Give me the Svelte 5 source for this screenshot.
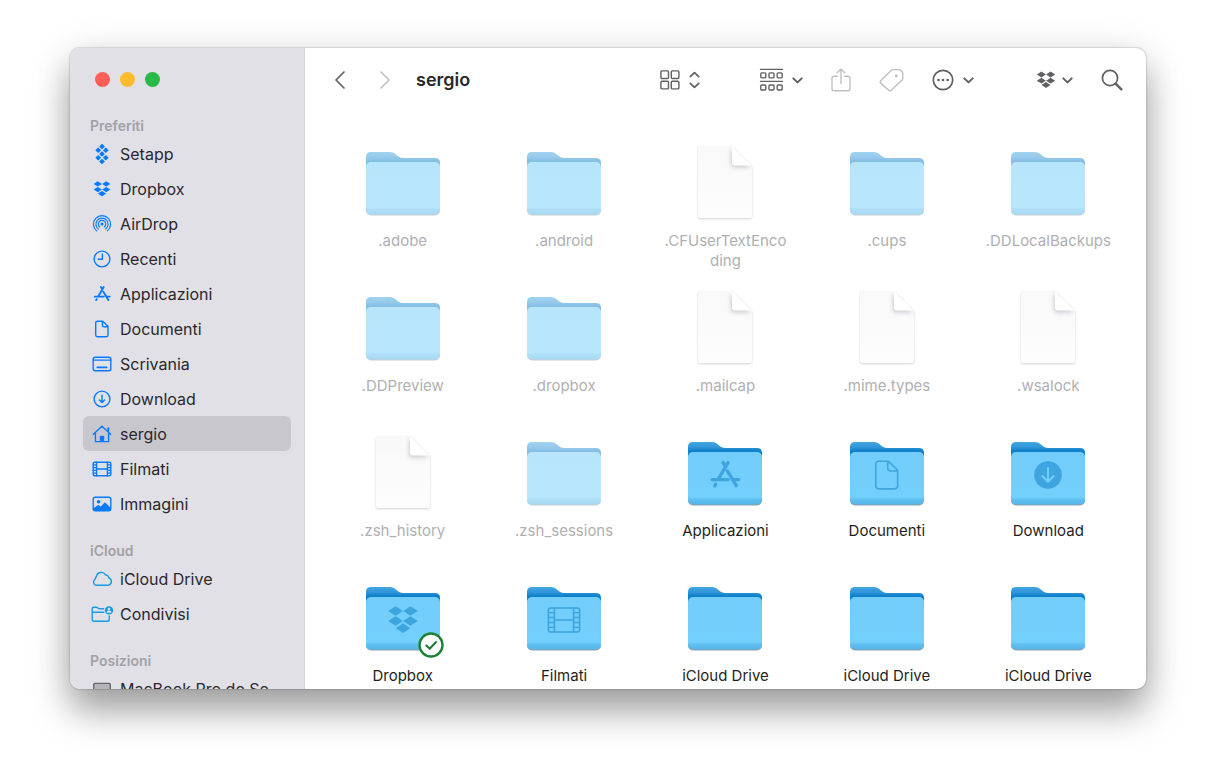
<script>
    const sections = [
        {
            title: "Preferiti",
            items: [
                { name: "Setapp", icon: "setapp" },
                { name: "Dropbox", icon: "dropbox" },
                { name: "AirDrop", icon: "airdrop" },
                { name: "Recenti", icon: "clock" },
                { name: "Applicazioni", icon: "apps" },
                { name: "Documenti", icon: "document" },
                { name: "Scrivania", icon: "desktop" },
                { name: "Download", icon: "download" },
                { name: "sergio", icon: "home" },
                { name: "Filmati", icon: "film" },
                { name: "Immagini", icon: "image" },
            ],
        },
        {
            title: "iCloud",
            tint: "cloud",
            items: [
                { name: "iCloud Drive", icon: "cloud" },
                { name: "Condivisi", icon: "shared" },
            ],
        },
        {
            title: "Posizioni",
            tint: "device",
            items: [{ name: "MacBook Pro de Se...", icon: "laptop" }],
        },
    ];

    const files = [
        { name: ".adobe", kind: "folder", hidden: true },
        { name: ".android", kind: "folder", hidden: true },
        { name: ".CFUserTextEncoding", kind: "file", hidden: true },
        { name: ".cups", kind: "folder", hidden: true },
        { name: ".DDLocalBackups", kind: "folder", hidden: true },
        { name: ".DDPreview", kind: "folder", hidden: true },
        { name: ".dropbox", kind: "folder", hidden: true },
        { name: ".mailcap", kind: "file", hidden: true },
        { name: ".mime.types", kind: "file", hidden: true },
        { name: ".wsalock", kind: "file", hidden: true },
        { name: ".zsh_history", kind: "file", hidden: true },
        { name: ".zsh_sessions", kind: "folder", hidden: true },
        { name: "Applicazioni", kind: "folder", glyph: "apps" },
        { name: "Documenti", kind: "folder", glyph: "document" },
        { name: "Download", kind: "folder", glyph: "downloadFill" },
        { name: "Dropbox", kind: "folder", glyph: "dropbox", synced: true },
        { name: "Filmati", kind: "folder", glyph: "film" },
        { name: "iCloud Drive", kind: "folder" },
        { name: "iCloud Drive", kind: "folder" },
        { name: "iCloud Drive", kind: "folder" },
    ];

    let current = $state("sergio");
</script>

<!-- All glyphs are drawn on a 22x22 box -->
{#snippet glyph(name)}
    {#if name === "setapp"}
        <path
            class="solid"
            d="M11 .8l2.900 2.700L11 6.200 8.100 3.500zM7.200 4.500l2.900 2.700-2.900 2.700-2.900-2.700zM14.800 4.500l2.900 2.700-2.900 2.700-2.900-2.700zM11 8.300l2.900 2.700-2.900 2.700L8.100 11zM7.200 12.100l2.900 2.700-2.900 2.700-2.900-2.700zM14.800 12.100l2.900 2.700-2.900 2.700-2.900-2.700zM11 15.800l2.900 2.700-2.900 2.700-2.900-2.700z"
        />
    {:else if name === "dropbox"}
        <path
            class="solid"
            d="M6.800 3.200l4.100 2.700-4.100 2.700-4.200-2.700zM15.200 3.200l4.200 2.700-4.200 2.700-4.100-2.700zM6.800 8.900l4.100 2.700-4.100 2.700-4.200-2.700zM15.200 8.900l4.200 2.700-4.200 2.700-4.100-2.700zM11 12.900l4.100 2.700-4.100 2.800-4.100-2.800z"
        />
    {:else if name === "airdrop"}
        <circle class="solid" cx="11" cy="11" r="1.500" />
        <path
            class="fine"
            d="M5.600 17.900a8.600 8.600 0 1 1 10.800 0M7.300 16a6.100 6.100 0 1 1 7.400 0M8.800 14a3.700 3.700 0 1 1 4.400 0"
        />
    {:else if name === "clock"}
        <circle cx="11" cy="11" r="7.900" />
        <path d="M11.400 6v5.200H7.200" />
    {:else if name === "apps"}
        <path
            class="heavy"
            d="M12.700 4L7.300 13.200M9.900 4l1.500 2.500M3.700 13.600h9.100M16.200 13.600h2.500M12.300 8.700l5.100 8.300M5.700 16.200l-.5.900"
        />
    {:else if name === "document"}
        <path
            d="M6.300 3.200h5.400l5.300 5.100v8.800q0 1.700-1.700 1.700h-9q-1.600 0-1.600-1.700V4.800q0-1.600 1.600-1.600zM11.400 3.400v3.800q0 1.500 1.500 1.500h3.900"
        />
    {:else if name === "desktop"}
        <rect x="2.200" y="4.200" width="17.600" height="13.600" rx="2" />
        <path d="M2.400 7.100h17.200" />
        <path class="heavy" d="M6.400 14.400h9.200" />
    {:else if name === "download"}
        <circle cx="11" cy="11" r="7.900" />
        <path d="M11 7.300v7M8.400 11.900l2.600 2.600 2.600-2.600" />
    {:else if name === "downloadFill"}
        <circle class="solid" cx="11" cy="11" r="7.800" />
        <path class="cutout" d="M11 7v7.600M7.800 11.600l3.200 3.200 3.200-3.200" />
    {:else if name === "home"}
        <path d="M2.300 11.200L11 3.300l8.700 7.900M4.400 10v8.600h13.200V10" />
        <path class="heavy" d="M17.300 8V5.200" />
        <path class="solid" d="M8.800 12.800h4.400v5.800H8.800z" />
    {:else if name === "film"}
        <rect x="2.200" y="4.200" width="17.600" height="13.600" rx="1.400" />
        <path
            d="M5.600 4.200v13.600M16.400 4.200v13.600M5.600 11h10.800M2.400 6.900h3.200M2.400 9.600h3.200M2.400 12.400h3.200M2.400 15.100h3.200M16.400 6.900h3.200M16.400 9.600h3.200M16.400 12.400h3.200M16.400 15.100h3.200"
        />
    {:else if name === "image"}
        <rect x="2.200" y="4.200" width="17.600" height="13.600" rx="2" />
        <circle class="solid" cx="7.600" cy="8.700" r="1.800" />
        <path
            class="solid"
            d="M2.600 15.300l4.100-3.100q.7-.5 1.400.1l1.500 1.400 3.500-3.700q.8-.8 1.600 0l4.800 4.700v1.700q0 1.500-1.500 1.500H4.100q-1.500 0-1.500-1.500z"
        />
    {:else if name === "cloud"}
        <path
            d="M5.200 17.200h11.600a3.800 3.800 0 0 0 1-7.400A3 3 0 0 0 14.600 7 5 5 0 0 0 5.300 8.600 3 3 0 0 0 4.300 11.200 3.200 3.200 0 0 0 5.200 17.200z"
        />
    {:else if name === "shared"}
        <path
            d="M18.200 13v3.500q0 1.800-1.800 1.800H3q-1.800 0-1.800-1.800V5.800q0-1.500 1.500-1.500h2.600q1 0 1.700.8t1.700.6h4M1.400 9.200h11.400"
        />
        <circle class="solid" cx="18" cy="7.400" r="4.200" />
        <circle class="paper" cx="18" cy="6" r="1.300" />
        <path class="paper" d="M15.400 9.800a2.600 2.200 0 0 1 5.200 0z" />
    {:else if name === "laptop"}
        <rect class="screen" x="2.700" y="5.400" width="16.600" height="11" rx="1" />
        <path d="M.8 17.600h20.400" />
    {/if}
{/snippet}

{#snippet chevron()}
    <svg class="chevron" viewBox="0 0 11 20" aria-hidden="true">
        <path d="M1.300 8.400l4.200 4 4.200-4" />
    </svg>
{/snippet}

<div class="backdrop">
    <div class="window">
        <aside class="sidebar">
            <div class="lights">
                <button class="light close" aria-label="Chiudi"></button>
                <button class="light minimize" aria-label="Riduci"></button>
                <button class="light zoom" aria-label="Ingrandisci"></button>
            </div>

            {#each sections as section}
                <nav class="section {section.tint ?? ''}" aria-label={section.title}>
                    <h2>{section.title}</h2>
                    {#each section.items as item}
                        <button
                            class="place"
                            class:selected={current === item.name}
                            onclick={() => (current = item.name)}
                        >
                            <svg class="glyph" viewBox="0 0 22 22" aria-hidden="true">
                                {@render glyph(item.icon)}
                            </svg>
                            <span>{item.name}</span>
                        </button>
                    {/each}
                </nav>
            {/each}
        </aside>

        <main>
            <header class="toolbar">
                <div class="history">
                    <button class="tool" aria-label="Indietro">
                        <svg width="12" height="20" viewBox="0 0 12 20">
                            <path d="M10 2L2 10l8 8" />
                        </svg>
                    </button>
                    <button class="tool faded" aria-label="Avanti">
                        <svg width="12" height="20" viewBox="0 0 12 20">
                            <path d="M2 2l8 8-8 8" />
                        </svg>
                    </button>
                </div>
                <h1>sergio</h1>

                <div class="tools">
                    <button class="tool spaced" aria-label="Vista">
                        <svg class="thin" width="20" height="20" viewBox="0 0 20 20">
                            <rect x=".9" y=".9" width="7.600" height="7.600" rx="1" />
                            <rect x="11.300" y=".9" width="7.600" height="7.600" rx="1" />
                            <rect x=".9" y="11.300" width="7.600" height="7.600" rx="1" />
                            <rect x="11.300" y="11.300" width="7.600" height="7.600" rx="1" />
                        </svg>
                        <svg width="11" height="20" viewBox="0 0 11 20">
                            <path d="M1.300 6.600l4.200-4 4.200 4M1.300 13.400l4.200 4 4.200-4" />
                        </svg>
                    </button>
                    <button class="tool" aria-label="Raggruppa">
                        <svg class="thin" width="23" height="24" viewBox="0 0 23 24">
                            <path d="M.5 1.400h22M.5 13.400h22" />
                            <rect x=".8" y="4.900" width="5" height="5" rx="1" />
                            <rect x="9" y="4.900" width="5" height="5" rx="1" />
                            <rect x="17.200" y="4.900" width="5" height="5" rx="1" />
                            <rect x=".8" y="17" width="5" height="5" rx="1" />
                            <rect x="9" y="17" width="5" height="5" rx="1" />
                            <rect x="17.200" y="17" width="5" height="5" rx="1" />
                        </svg>
                        {@render chevron()}
                    </button>
                    <button class="tool faded" aria-label="Condividi">
                        <svg class="thin" width="20" height="24" viewBox="0 0 20 24">
                            <path
                                d="M6.300 8.200H3q-2 0-2 2v10.600q0 2 2 2h14q2 0 2-2V10.200q0-2-2-2h-3.300M10 15.400V1.200M6.200 4.800L10 1l3.800 3.800"
                            />
                        </svg>
                    </button>
                    <button class="tool faded" aria-label="Tag">
                        <svg class="thin" width="25" height="24" viewBox="0 0 25 24">
                            <path
                                d="M14.200 1.600h5.600q1.100 0 1.900.8l1.200 1.200q.8.8.8 1.900v4.900q0 1.100-.8 1.900L12.400 22q-1.500 1.500-3 0l-7.500-6.600q-1.400-1.400 0-2.800L12.200 2.400q.8-.8 2-.8z"
                            />
                            <circle class="solid" cx="17.300" cy="7.800" r=".8" />
                        </svg>
                    </button>
                    <button class="tool spaced" aria-label="Azioni">
                        <svg width="22" height="22" viewBox="0 0 22 22">
                            <circle cx="11" cy="11" r="9.700" />
                            <path class="dots" d="M6.400 11h.1M11 11h.1M15.600 11h.1" />
                        </svg>
                        {@render chevron()}
                    </button>
                    <button class="tool compact" aria-label="Dropbox">
                        <svg class="glyph" width="24" height="24" viewBox="0 0 22 22">
                            {@render glyph("dropbox")}
                        </svg>
                        {@render chevron()}
                    </button>
                    <button class="tool" aria-label="Cerca">
                        <svg width="22" height="22" viewBox="0 0 22 22">
                            <circle cx="9" cy="9" r="7.600" />
                            <path class="handle" d="M14.800 14.800l5.600 5.600" />
                        </svg>
                    </button>
                </div>
            </header>

            <div class="files">
                {#each files as file}
                    <button class="file" class:hidden={file.hidden}>
                        <svg class="artwork" viewBox="0 0 80 80" aria-hidden="true">
                            {#if file.kind === "folder"}
                                <path
                                    d="M3 13q0-5 5-5h19q3 0 5 1.700l3 2.600q2 1.700 5 1.700h32q5 0 5 5v10H3z"
                                    fill="url(#tab)"
                                />
                                <rect class="lip" x="3" y="19" width="74" height="52.500" rx="5" />
                                <rect x="3" y="18" width="74" height="52.500" rx="5" fill="url(#front)" />
                                {#if file.glyph}
                                    <svg class="glyph emboss" x="20.500" y="21.500" width="39" height="39" viewBox="0 0 22 22">
                                        {@render glyph(file.glyph)}
                                    </svg>
                                {/if}
                                {#if file.synced}
                                    <circle class="badge" cx="68" cy="66" r="11.500" />
                                    <path class="tick" d="M63.300 66.500l3.400 3.300 6.300-6.800" />
                                {/if}
                            {:else}
                                <path
                                    class="sheet"
                                    d="M15 2h32l20 20v50q0 2-2 2H15q-2 0-2-2V4q0-2 2-2z"
                                    fill="url(#paper)"
                                />
                                <path class="fold" d="M47 2.500v16q0 3 3 3h16.500z" />
                            {/if}
                        </svg>
                        <span class="label">{file.name}</span>
                    </button>
                {/each}
            </div>
        </main>
    </div>
</div>

<svg class="defs" width="0" height="0" aria-hidden="true">
    <defs>
        <linearGradient id="tab" x1="0" y1="0" x2="0" y2="1">
            <stop offset="0" stop-color="#45a6e2" />
            <stop offset="0.270" stop-color="#2c94d8" />
            <stop offset="0.420" stop-color="#0f80ca" />
        </linearGradient>
        <linearGradient id="front" x1="0" y1="0" x2="0" y2="1">
            <stop offset="0" stop-color="#72cdfa" />
            <stop offset="0.860" stop-color="#73cffc" />
            <stop offset="0.900" stop-color="#60c0f1" />
            <stop offset="1" stop-color="#54b5e9" />
        </linearGradient>
        <linearGradient id="paper" x1="0" y1="0" x2="0" y2="1">
            <stop offset="0" stop-color="#f4f4f5" />
            <stop offset="1" stop-color="#fcfcfc" />
        </linearGradient>
    </defs>
</svg>

<style>
    :global(body) {
        background: #fff;
        font-family: Inter, "Liberation Sans", sans-serif;
    }

    button {
        border: 0;
        padding: 0;
        background: none;
        font: inherit;
        color: inherit;
    }

    svg {
        flex: none;
        overflow: visible;
        fill: none;
        stroke-linecap: round;
        stroke-linejoin: round;
    }

    .defs {
        display: block;
    }

    .backdrop {
        display: flex;
        box-sizing: border-box;
        height: 100vh;
        padding: 48px 70px 92px;
        overflow: hidden;
    }

    .window {
        display: flex;
        flex: 1;
        min-width: 0;
        border-radius: 10px;
        overflow: hidden;
        background: #fff;
        box-shadow:
            0 0 1px 1px rgba(0, 0, 0, 0.12),
            0 22px 36px rgba(0, 0, 0, 0.36),
            0 0 40px rgba(0, 0, 0, 0.08);
    }

    .sidebar {
        flex: none;
        box-sizing: border-box;
        width: 235px;
        padding: 0 13px;
        overflow: hidden;
        background: #e1e0e6;
        border-right: 1px solid #d3d2d8;
    }

    .lights {
        display: flex;
        gap: 10px;
        height: 43px;
        padding: 24px 12px 0;
    }

    .light {
        width: 15px;
        height: 15px;
        border-radius: 50%;
    }

    .close {
        background: #fe5f57;
    }

    .minimize {
        background: #fdbc2e;
    }

    .zoom {
        background: #28b946;
    }

    .section {
        margin-bottom: 19px;
        color: #087aff;
    }

    .section.cloud {
        color: #189ce5;
    }

    .section.device {
        color: #69696c;
    }

    .section h2 {
        margin: 0;
        padding-left: 7px;
        font-size: 14px;
        font-weight: 600;
        line-height: 21px;
        color: #a1a1a6;
    }

    .place {
        display: flex;
        align-items: center;
        gap: 7px;
        width: 100%;
        height: 35px;
        padding-left: 8px;
        border-radius: 6px;
        font-size: 16px;
        text-align: left;
        white-space: nowrap;
    }

    .place span {
        color: #29282c;
    }

    .place.selected {
        background: #c8c7cd;
    }

    .place .glyph {
        width: 22px;
        height: 22px;
    }

    .glyph {
        stroke: currentColor;
        stroke-width: 1.4px;
    }

    .glyph .solid {
        fill: currentColor;
        stroke: none;
    }

    .glyph .heavy {
        stroke-width: 1.9px;
    }

    .glyph .fine {
        stroke-width: 1.2px;
    }

    .glyph .paper {
        fill: #e1e0e6;
        stroke: none;
    }

    .glyph .screen {
        fill: #b5b5b9;
    }

    main {
        flex: 1;
        min-width: 0;
    }

    .toolbar {
        display: flex;
        align-items: center;
        height: 63px;
        padding: 0 23px 0 29px;
        color: #606063;
    }

    .history {
        display: flex;
        gap: 33px;
        margin-right: 25px;
    }

    h1 {
        flex: 1;
        margin: 0;
        font-size: 18px;
        font-weight: 600;
        color: #29292b;
    }

    .tools {
        display: flex;
        align-items: center;
        gap: 28px;
    }

    .tool {
        display: flex;
        align-items: center;
        gap: 9px;
        stroke: currentColor;
        stroke-width: 1.7px;
    }

    .tool.faded {
        color: #c0c0c4;
    }

    .tool.spaced {
        margin-right: 32px;
    }

    .tool.compact {
        gap: 4px;
    }

    .tool .thin {
        stroke-width: 1.4px;
    }

    .tool .solid {
        fill: currentColor;
    }

    .tool .dots {
        stroke-width: 2.6px;
    }

    .tool .handle {
        stroke-width: 2.4px;
    }

    .chevron {
        width: 11px;
        height: 20px;
        stroke-width: 2px;
    }

    .files {
        display: grid;
        grid-template-columns: repeat(5, 1fr);
        grid-auto-rows: 145px;
        padding: 33px 17px 0;
    }

    .file {
        display: flex;
        flex-direction: column;
        align-items: center;
        gap: 7px;
        min-width: 0;
        font-size: 15px;
        line-height: 20px;
        color: #1f1f21;
    }

    .artwork {
        width: 80px;
        height: 80px;
    }

    .label {
        max-width: 128px;
        word-break: break-all;
    }

    .file.hidden .artwork {
        opacity: 0.5;
    }

    .file.hidden .label {
        color: #b0b0b3;
    }

    .lip {
        fill: #8d9fac;
    }

    .emboss {
        color: #3ea5de;
        stroke-width: 0.9px;
    }

    .emboss .cutout {
        stroke: #73cffc;
        stroke-width: 1.1px;
    }

    .badge {
        fill: #fff;
        stroke: #1c8237;
        stroke-width: 2.4px;
    }

    .tick {
        stroke: #1c7a36;
        stroke-width: 2px;
    }

    .sheet {
        filter: drop-shadow(0 1px 1px rgba(0, 0, 0, 0.35));
    }

    .fold {
        fill: #fff;
        filter: drop-shadow(-1px 2px 2px rgba(40, 40, 70, 0.45));
    }
</style>
